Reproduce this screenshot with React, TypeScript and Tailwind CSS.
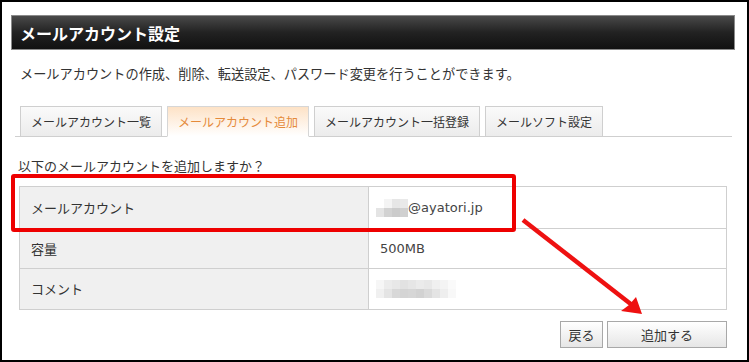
const tabs = [
  { label: 'メールアカウント一覧', active: false },
  { label: 'メールアカウント追加', active: true },
  { label: 'メールアカウント一括登録', active: false },
  { label: 'メールソフト設定', active: false },
];

// pixelated "blurred" placeholder, like a mosaic over private text
function Mosaic({ cells }: { cells: string[][] }) {
  return (
    <div className="flex flex-col">
      {cells.map((row, i) => (
        <div key={i} className="flex">
          {row.map((c, j) => (
            <div key={j} className="w-[8px] h-[9px]" style={{ backgroundColor: c }} />
          ))}
        </div>
      ))}
    </div>
  );
}

const emailMosaic = [
  ['#fff', '#f4f4f4', '#e6e6e6', '#e9e9e9'],
  ['#e4e4e4', '#d2d2d2', '#cbcbcb', '#d0d0d0'],
];

const commentMosaic = [
  ['#f6f6f6', '#ececec', '#e8e8e8', '#e2e2e2', '#e6e6e6', '#ebebeb', '#e8e8e8', '#f0f0f0', '#f4f4f4', '#fafafa'],
  ['#f0f0f0', '#e4e4e4', '#d8d8d8', '#d4d4d4', '#d6d6d6', '#d2d2d2', '#dadada', '#e4e4e4', '#eeeeee', '#f8f8f8'],
];

export default function App() {
  return (
    <div className="relative w-[749px] h-[362px] border-2 border-black bg-white font-['DejaVu_Sans','Noto_Sans_CJK_JP',sans-serif] text-[#333] overflow-hidden">
      {/* title bar */}
      <div className="ml-[9px] mt-[13px] w-[724px] h-[35px] border border-[#8a8a8a] bg-linear-to-b from-[#4a4a4a] via-[#222] to-[#111] flex items-center pl-[8px]">
        <span className="text-white text-[16px] font-bold font-['Noto_Sans_CJK_JP',sans-serif]">
          メールアカウント設定
        </span>
      </div>

      <p className="ml-[18px] mt-[14px] text-[13.2px] leading-[20px] font-['Noto_Sans_CJK_JP',sans-serif]">
        メールアカウントの作成、削除、転送設定、パスワード変更を行うことができます。
      </p>

      {/* tabs */}
      <div className="ml-[13px] mt-[22px] w-[717px] border-b border-[#cfcfcf] flex gap-[5px] pl-[5px]">
        {tabs.map((t) => (
          <div
            key={t.label}
            className={
              t.active
                ? "h-[31px] -mb-px px-[10px] flex items-center border border-[#d6d6d6] border-b-white bg-linear-to-b from-[#fde2c6] to-white text-[12px] text-[#e58a3a] font-['Noto_Sans_CJK_JP',sans-serif]"
                : "h-[30px] px-[10px] flex items-center border border-b-0 border-[#cfcfcf] bg-linear-to-b from-[#fafafa] to-[#ececec] text-[12px] text-[#333] font-['Noto_Sans_CJK_JP',sans-serif]"
            }
          >
            {t.label}
          </div>
        ))}
      </div>

      <p className="ml-[16px] mt-[20px] text-[13px] leading-[18px] font-['Noto_Sans_CJK_JP',sans-serif]">
        以下のメールアカウントを追加しますか？
      </p>

      {/* confirmation table */}
      <table className="ml-[17px] mt-[11px] w-[708px] border-collapse text-[13px]">
        <tbody>
          <tr className="h-[42px]">
            <th className="w-[349px] border border-[#cfcfcf] bg-[#f0f0f0] text-left font-normal pl-[11px] font-['Noto_Sans_CJK_JP',sans-serif]">
              メールアカウント
            </th>
            <td className="border border-[#cfcfcf] pl-[7px]">
              <div className="flex items-center">
                <Mosaic cells={emailMosaic} />
                <span className="text-[13px] text-[#444]">@ayatori.jp</span>
              </div>
            </td>
          </tr>
          <tr className="h-[40px]">
            <th className="border border-[#cfcfcf] bg-[#f0f0f0] text-left font-normal pl-[11px] font-['Noto_Sans_CJK_JP',sans-serif]">
              容量
            </th>
            <td className="border border-[#cfcfcf] pl-[11px] text-[#444]">500MB</td>
          </tr>
          <tr className="h-[41px]">
            <th className="border border-[#cfcfcf] bg-[#f0f0f0] text-left font-normal pl-[11px] font-['Noto_Sans_CJK_JP',sans-serif]">
              コメント
            </th>
            <td className="border border-[#cfcfcf] pl-[7px]">
              <Mosaic cells={commentMosaic} />
            </td>
          </tr>
        </tbody>
      </table>

      {/* buttons */}
      <div className="mt-[11px] w-[725px] flex justify-end gap-[4px]">
        <button className="w-[43px] h-[27px] border border-[#a8a8a8] bg-linear-to-b from-white to-[#e6e6e6] text-[13px] text-[#333] font-['Noto_Sans_CJK_JP',sans-serif]">
          戻る
        </button>
        <button className="w-[120px] h-[27px] border border-[#a8a8a8] bg-linear-to-b from-white to-[#e6e6e6] text-[13px] text-[#333] font-['Noto_Sans_CJK_JP',sans-serif]">
          追加する
        </button>
      </div>

      {/* red annotation box */}
      <div className="absolute left-[9px] top-[172px] w-[505px] h-[58px] border-[4px] border-[#ee0000] rounded-[3px]" />

      {/* red annotation arrow */}
      <svg className="absolute left-0 top-0 pointer-events-none" width="745" height="358" viewBox="0 0 745 358">
        <line x1="521" y1="218" x2="630" y2="303" stroke="#ee1111" strokeWidth="4.5" />
        <polygon points="640,312 619,309 627,303 634,295" fill="#ee1111" />
      </svg>
    </div>
  );
}
